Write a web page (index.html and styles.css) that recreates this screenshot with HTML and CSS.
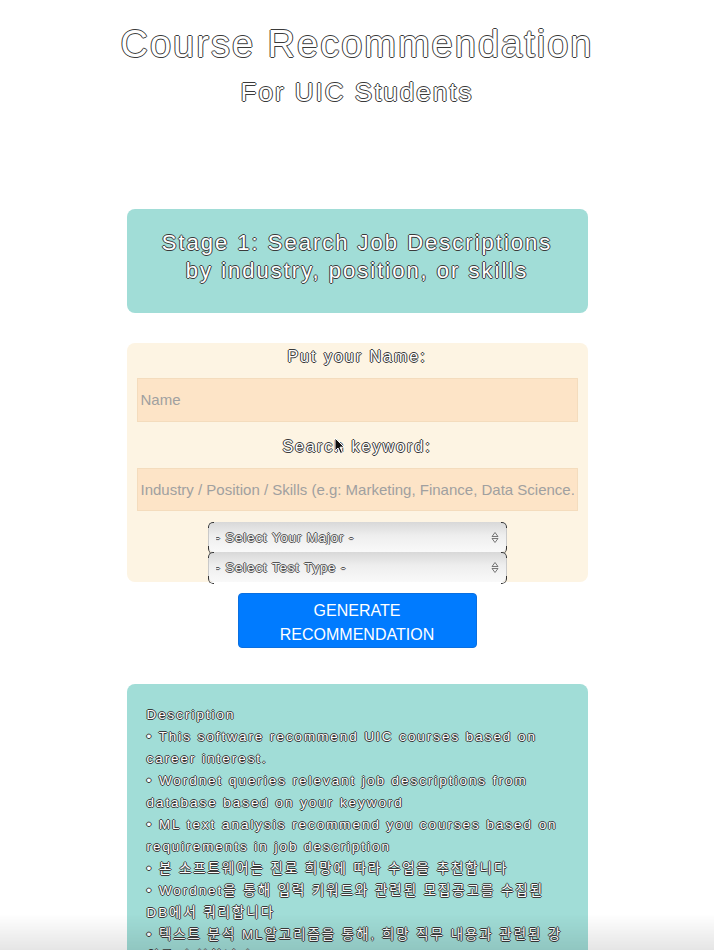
FILE: index.html
```html
<!DOCTYPE html>
<html lang="en">
<head>
<meta charset="utf-8">
<title>Course Recommendation</title>
<link rel="stylesheet" href="styles.css">
</head>
<body>
<header class="masthead">
  <h1 class="title outline">Course Recommendation</h1>
  <h2 class="subtitle outline">For UIC Students</h2>
</header>

<main class="page">
  <section class="stage card-teal">
    <p class="stage-text outline">Stage 1: Search Job Descriptions<br>by industry, position, or skills</p>
  </section>

  <form class="search-form">
    <label class="field-label outline" for="name">Put your Name:</label>
    <input class="field-input" id="name" type="text" placeholder="Name">
    <label class="field-label outline" for="kw">Search keyword:</label>
    <input class="field-input" id="kw" type="text" placeholder="Industry / Position / Skills (e.g: Marketing, Finance, Data Science...)">
    <div class="select-stack">
      <div class="select-wrap">
        <select class="select outline-soft"><option>- Select Your Major -</option></select>
        <svg class="select-arrow" width="8" height="13" viewBox="0 0 8 13"><path d="M1 5.5 L4 1.5 L7 5.5 Z M1 7.5 L4 11.5 L7 7.5 Z" fill="none" stroke="#6a6a6a" stroke-width="0.9" stroke-linejoin="round"/></svg>
      </div>
      <div class="select-wrap">
        <select class="select outline-soft"><option>- Select Test Type -</option></select>
        <svg class="select-arrow" width="8" height="13" viewBox="0 0 8 13"><path d="M1 5.5 L4 1.5 L7 5.5 Z M1 7.5 L4 11.5 L7 7.5 Z" fill="none" stroke="#6a6a6a" stroke-width="0.9" stroke-linejoin="round"/></svg>
      </div>
    </div>
  </form>

  <button class="generate" type="button">GENERATE RECOMMENDATION</button>

  <section class="description card-teal">
    <p class="desc-text outline">Description<br>
    • This software recommend UIC courses based on career interest.<br>
    • Wordnet queries relevant job descriptions from database based on your keyword<br>
    • ML text analysis recommend you courses based on requirements in job description<br>
    • 본 소프트웨어는 진로 희망에 따라 수업을 추천합니다<br>
    • Wordnet을 통해 입력 키워드와 관련된 모집공고를 수집된 <span class="nowrap">DB에서</span> 쿼리합니다<br>
    • 텍스트 분석 ML알고리즘을 통해, 희망 직무 내용과 관련된 강의를 추천합니다</p>
  </section>
</main>

<svg class="cursor" width="12" height="18" viewBox="0 0 12 18"><path d="M1 1 L1 14 L4 11 L6.5 16.5 L8.5 15.6 L6 10.2 L10.2 10.2 Z" fill="#111" stroke="#fff" stroke-width="1"/></svg>
<div class="bottom-shade"></div>
</body>
</html>
```

FILE: styles.css
```css
* { box-sizing: border-box; }

html, body {
  margin: 0;
  padding: 0;
  background: #ffffff;
}

body {
  font-family: "Liberation Sans", Arial, "Noto Sans CJK KR", sans-serif;
  letter-spacing: 2px;
  color: #ffffff;
}

.outline {
  color: #ffffff;
  text-shadow: -1px 0 0 #3a3a3a, 1px 0 0 #3a3a3a, 0 -1px 0 #3a3a3a, 0 1px 0 #3a3a3a;
}

.outline-soft {
  color: #f4f4f4;
  text-shadow: -1px 0 0 #555, 1px 0 0 #555, 0 -1px 0 #555, 0 1px 0 #555;
}

.nowrap { white-space: nowrap; }

.masthead {
  display: flex;
  flex-direction: column;
  align-items: center;
  padding-top: 22px;
}

.title {
  margin: 0;
  font-weight: normal;
  font-size: 38px;
  line-height: 44px;
}

.subtitle {
  margin: 11px 0 0;
  font-weight: normal;
  font-size: 26px;
  line-height: 30px;
}

.page {
  width: 461px;
  margin: 102px auto 0;
  display: flex;
  flex-direction: column;
  align-items: center;
}

.card-teal {
  width: 100%;
  background: #a1ddd7;
  border-radius: 8px;
}

.stage {
  padding: 20px 10px 28px;
}

.stage-text {
  margin: 0;
  text-align: center;
  font-size: 22px;
  line-height: 28px;
}

.search-form {
  width: 100%;
  margin-top: 30px;
  background: #fdf4e3;
  border-radius: 8px;
  padding: 2px 10px 0;
  display: flex;
  flex-direction: column;
  align-items: stretch;
  height: 239px;
}

.field-label {
  display: block;
  text-align: center;
  font-size: 16px;
  line-height: 24px;
  margin-bottom: 9px;
}

.field-input {
  height: 44px;
  background: #fde4c7;
  border: 1px solid #f4dcbd;
  padding: 0 3px;
  font-family: "Liberation Sans", Arial, sans-serif;
  font-size: 15px;
  letter-spacing: 0;
  color: #333;
  margin: 0 0 13px;
  outline: none;
}

.field-input::placeholder {
  color: #a0a0a0;
}

.select-stack {
  display: flex;
  flex-direction: column;
  align-items: center;
  margin-top: -2px;
}

.select-wrap {
  position: relative;
  width: 299px;
  height: 30px;
}

.select-wrap::before,
.select-wrap::after {
  content: "";
  position: absolute;
  top: 0;
  width: 5px;
  height: 30px;
  border: 1px solid #333;
  pointer-events: none;
  -webkit-mask: linear-gradient(#000 0 6px, transparent 6px 24px, #000 24px);
  mask: linear-gradient(#000 0 6px, transparent 6px 24px, #000 24px);
}

.select-wrap::before {
  left: 0;
  border-right: none;
  border-radius: 5px 0 0 5px;
}

.select-wrap::after {
  right: 0;
  border-left: none;
  border-radius: 0 5px 5px 0;
}

.select {
  appearance: none;
  -webkit-appearance: none;
  width: 100%;
  height: 30px;
  border: none;
  border-left: 1px solid #c9c9c9;
  border-right: 1px solid #c9c9c9;
  border-radius: 5px;
  background: linear-gradient(#d8d8d8, #eeeeee 45%, #f9f9f9);
  padding: 0 24px 0 7px;
  font-family: "Liberation Sans", Arial, sans-serif;
  font-size: 13px;
  letter-spacing: 1px;
}

.select-arrow {
  position: absolute;
  right: 8px;
  top: 9px;
  pointer-events: none;
}

.generate {
  margin-top: 11px;
  width: 239px;
  background: #007bff;
  border: 1px solid #0a6fe0;
  border-radius: 4px;
  color: #ffffff;
  font-family: "Liberation Sans", Arial, sans-serif;
  font-size: 16px;
  letter-spacing: 0;
  line-height: 24px;
  padding: 5px 12px 0;
}

.description {
  margin-top: 36px;
  padding: 20px 20px 40px;
}

.desc-text {
  margin: 0;
  font-size: 13.4px;
  line-height: 22px;
}

.cursor {
  position: absolute;
  left: 334px;
  top: 437px;
}

.bottom-shade {
  position: fixed;
  left: 0;
  right: 0;
  bottom: 0;
  height: 36px;
  background: linear-gradient(rgba(0,0,0,0), rgba(0,0,0,0.1));
  pointer-events: none;
}
```
